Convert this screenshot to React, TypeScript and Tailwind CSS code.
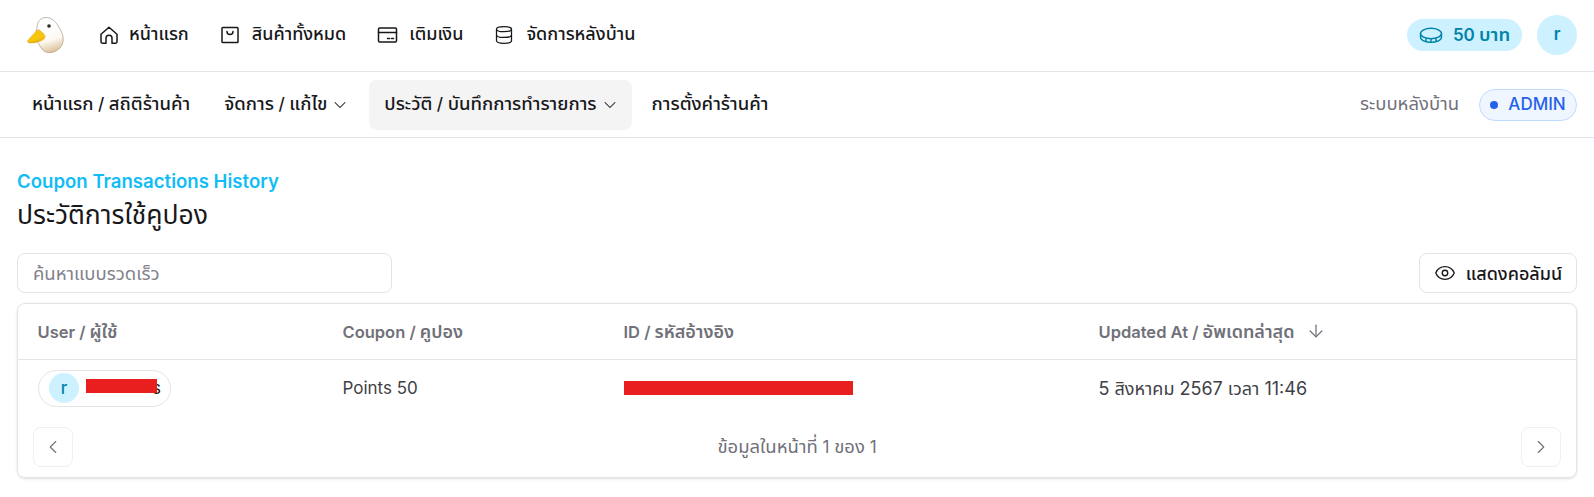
import { ArrowDown, ChevronDown, ChevronLeft, ChevronRight, Database, Eye } from "lucide-react";

const HouseIcon = () => (
  <svg width="20" height="20" viewBox="0 0 20 20" fill="none" stroke="currentColor" strokeWidth="1.5" strokeLinecap="round" strokeLinejoin="round">
    <path d="M2 9.2 10 2.2l8 7v7.6a1.4 1.4 0 0 1-1.4 1.4H13v-5a3 3 0 0 0-6 0v5H3.4A1.4 1.4 0 0 1 2 16.8z" />
  </svg>
);

const BagIcon = () => (
  <svg width="20" height="20" viewBox="0 0 20 20" fill="none" stroke="currentColor" strokeWidth="1.5" strokeLinecap="round" strokeLinejoin="round">
    <rect x="2" y="2.5" width="16" height="15" rx="0.8" />
    <path d="M7 6.5c0 4 6 4 6 0" />
  </svg>
);

const CardIcon = () => (
  <svg width="21" height="20" viewBox="0 0 21 20" fill="none" stroke="currentColor" strokeWidth="1.5" strokeLinecap="round" strokeLinejoin="round">
    <rect x="1.5" y="3" width="18" height="14" rx="1.2" />
    <path d="M1.5 7.5h18M10.500 13.500h2M14.500 13.500h2" />
  </svg>
);

const CoinIcon = () => (
  <svg width="24" height="18" viewBox="0 0 24 18" fill="none" stroke="currentColor" strokeWidth="1.4" strokeLinecap="round" strokeLinejoin="round">
    <ellipse cx="12" cy="7.5" rx="10.5" ry="5.2" />
    <path d="M1.5 7.5v3.5c0 3 4.7 5.3 10.5 5.3s10.500-2.300 10.500-5.300V7.500M7 12.500v3.300M12 13v3.300M17 12.500v3.300" />
  </svg>
);

const Duck = () => (
  <svg width="38" height="38" viewBox="0 0 38 38">
    <defs>
      <linearGradient id="duckBody" x1="0.4" y1="0.2" x2="0.6" y2="1">
        <stop offset="0" stopColor="#ffffff" />
        <stop offset="0.55" stopColor="#fdf9f2" />
        <stop offset="1" stopColor="#dcbf97" />
      </linearGradient>
    </defs>
    <path d="M20 1.500c-5.500 0-8.500 4-9 9.500-.3 3-1.500 5-1 9 .7 5 3 9 6 13 1.500 2.500 5 4 9 3.500 6-.7 11-5 12-11 .8-5-.8-8.500-3-12.500C31.500 8 27 1.500 20 1.500z" fill="url(#duckBody)" stroke="#a89a86" strokeWidth="0.7" />
    <circle cx="23" cy="10" r="1.800" fill="#2b2b2b" />
    <path d="M12.500 13.500c2.500 1.500 6 4.500 6.500 7 .3 2-2.500 4-6 5.200-4 1.300-9.500 1.800-11 .5-1.300-1 1-3.200 3.300-5.700 2.700-2.800 4.500-5.500 7.200-7z" fill="#f6c60d" stroke="#d29b2a" strokeWidth="0.5" />
    <path d="M2.500 26.500c3 .2 9-1 15-5" fill="none" stroke="#e2a21b" strokeWidth="0.8" />
  </svg>
);

const Th = ({ children }: { children: React.ReactNode }) => <span className="text-[18.5px]">{children}</span>;
const Th18 = ({ children }: { children: React.ReactNode }) => <span className="text-[18px]">{children}</span>;

function TopItem({ icon, label, gap }: { icon: React.ReactNode; label: string; gap: string }) {
  return (
    <a className={`flex items-center ${gap} font-medium text-[#18181b]`}>
      {icon}
      <span className="pb-[2px] text-[18px]">{label}</span>
    </a>
  );
}

export default function App() {
  return (
    <div className="min-h-[497px] bg-white font-['Inter','Noto_Sans_Thai','Noto_Sans',sans-serif] text-[17px] text-[#18181b]">
      <header className="flex h-[72px] items-center justify-between border-b border-[#e4e4e7] pb-[2px] pl-[26px] pr-[17px]">
        <div className="flex items-center">
          <Duck />
          <nav className="ml-[35px] flex items-center gap-[31px]">
            <TopItem icon={<HouseIcon />} label="หน้าแรก" gap="gap-[10px]" />
            <TopItem icon={<BagIcon />} label="สินค้าทั้งหมด" gap="gap-[12px]" />
            <TopItem icon={<CardIcon />} label="เติมเงิน" gap="gap-[11px]" />
            <TopItem icon={<Database size={20} strokeWidth={1.5} />} label="จัดการหลังบ้าน" gap="gap-[12px]" />
          </nav>
        </div>
        <div className="flex items-center gap-[15px]">
          <div className="flex h-[32px] w-[115px] items-center justify-center gap-[10px] rounded-full bg-[#cdf1ff] font-semibold text-[#0284a8]">
            <CoinIcon />
            <span>50 <Th>บาท</Th></span>
          </div>
          <div className="flex h-[40px] w-[40px] items-center justify-center rounded-full bg-[#cdf1ff] font-semibold text-[#0284a8]">r</div>
        </div>
      </header>

      <div className="flex h-[66px] items-center justify-between border-b border-[#e4e4e7] px-[17px]">
        <nav className="flex items-center font-medium">
          <a className="px-[15px] pb-[2px]"><Th>หน้าแรก</Th> / <Th>สถิติร้านค้า</Th></a>
          <a className="ml-[4px] flex items-center gap-[3px] pl-[15px] pr-[12px]">
            <span className="pb-[2px]"><Th>จัดการ</Th> / <Th>แก้ไข</Th></span> <ChevronDown size={20} strokeWidth={1.25} />
          </a>
          <a className="ml-[7px] flex h-[50px] items-center gap-[3px] rounded-[8px] bg-[#f4f4f5] pl-[15px] pr-[12px]">
            <span className="pb-[2px]"><Th>ประวัติ</Th> / <Th>บันทึกการทำรายการ</Th></span> <ChevronDown size={20} strokeWidth={1.25} />
          </a>
          <a className="ml-[5px] px-[15px] pb-[2px]"><Th>การตั้งค่าร้านค้า</Th></a>
        </nav>
        <div className="flex items-center gap-[20px]">
          <span className="pb-[2px] text-[18.5px] text-[#71717a]">ระบบหลังบ้าน</span>
          <span className="flex h-[32px] w-[98px] items-center justify-center gap-[10px] rounded-full border border-[#bfdbfe] bg-[#eff6ff] font-medium text-[#2563eb]">
            <span className="h-[8px] w-[8px] rounded-full bg-[#2563eb]" />
            ADMIN
          </span>
        </div>
      </div>

      <main className="px-[17px] pt-[29px]">
        <p className="text-[18.6px] font-semibold leading-[29px] text-[#12bdf5]">Coupon Transactions History</p>
        <h1 className="text-[26.5px] leading-[36px] font-normal text-[#18181b]">ประวัติการใช้คูปอง</h1>

        <div className="mt-[21px] flex items-center justify-between">
          <input
            readOnly
            placeholder="ค้นหาแบบรวดเร็ว"
            className="h-[40px] w-[375px] rounded-[8px] border border-[#e4e4e7] px-[15px] text-[18.5px] outline-none placeholder:text-[#82828a]"
          />
          <button className="flex h-[40px] w-[158px] items-center justify-center gap-[10px] rounded-[8px] border border-[#e4e4e7] font-medium">
            <Eye size={22} strokeWidth={1.5} />
            <Th18>แสดงคอลัมน์</Th18>
          </button>
        </div>

        <div className="mt-[10px] rounded-[8px] border border-[#e4e4e7] shadow-sm">
          <table className="w-full table-fixed border-collapse">
            <colgroup>
              <col className="w-[305px]" />
              <col className="w-[281px]" />
              <col className="w-[475px]" />
              <col />
            </colgroup>
            <thead>
              <tr className="h-[55px] border-b border-[#e4e4e7] text-left text-[16.5px] text-[#71717a]">
                <th className="pl-[19.5px] font-semibold">User / <Th18>ผู้ใช้</Th18></th>
                <th className="pl-[19.5px] font-semibold">Coupon / <Th18>คูปอง</Th18></th>
                <th className="pl-[19.5px] font-semibold">ID / <Th18>รหัสอ้างอิง</Th18></th>
                <th className="pl-[19.5px] font-semibold">
                  <span className="flex items-center gap-[12px]">
                    <span>Updated At / <Th18>อัพเดทล่าสุด</Th18></span> <ArrowDown size={20} strokeWidth={1.5} />
                  </span>
                </th>
              </tr>
            </thead>
            <tbody>
              <tr className="h-[58px]">
                <td className="pl-[20px]">
                  <span className="inline-flex h-[37px] w-[133px] items-center rounded-full border border-[#e4e4e7] pl-[10px]">
                    <span className="flex h-[30px] w-[30px] items-center justify-center rounded-full bg-[#cdf1ff] font-medium text-[#0284a8]">r</span>
                    <span className="relative ml-[7px] flex w-[75px] justify-end text-[#18181b]">
                      s
                      <span className="absolute left-0 top-[3px] h-[14px] w-[71px] bg-[#e91e1e]" />
                    </span>
                  </span>
                </td>
                <td className="pl-[19.5px] text-[#3f3f46]">Points 50</td>
                <td className="pl-[20px]">
                  <span className="block h-[14px] w-[229px] bg-[#e91e1e]" />
                </td>
                <td className="pl-[19.5px] text-[18px] text-[#3f3f46]">5 สิงหาคม 2567 เวลา 11:46</td>
              </tr>
            </tbody>
          </table>
          <div className="flex items-center justify-between px-[15px] pb-[10px] pt-[10px]">
            <button className="flex h-[40px] w-[40px] items-center justify-center rounded-[8px] border border-[#f0f0f1] text-[#71717a]">
              <ChevronLeft size={22} strokeWidth={1.25} />
            </button>
            <span className="text-[#71717a]"><Th>ข้อมูลในหน้าที่</Th> 1 <Th>ของ</Th> 1</span>
            <button className="flex h-[40px] w-[40px] items-center justify-center rounded-[8px] border border-[#f0f0f1] text-[#71717a]">
              <ChevronRight size={22} strokeWidth={1.25} />
            </button>
          </div>
        </div>
      </main>
    </div>
  );
}
